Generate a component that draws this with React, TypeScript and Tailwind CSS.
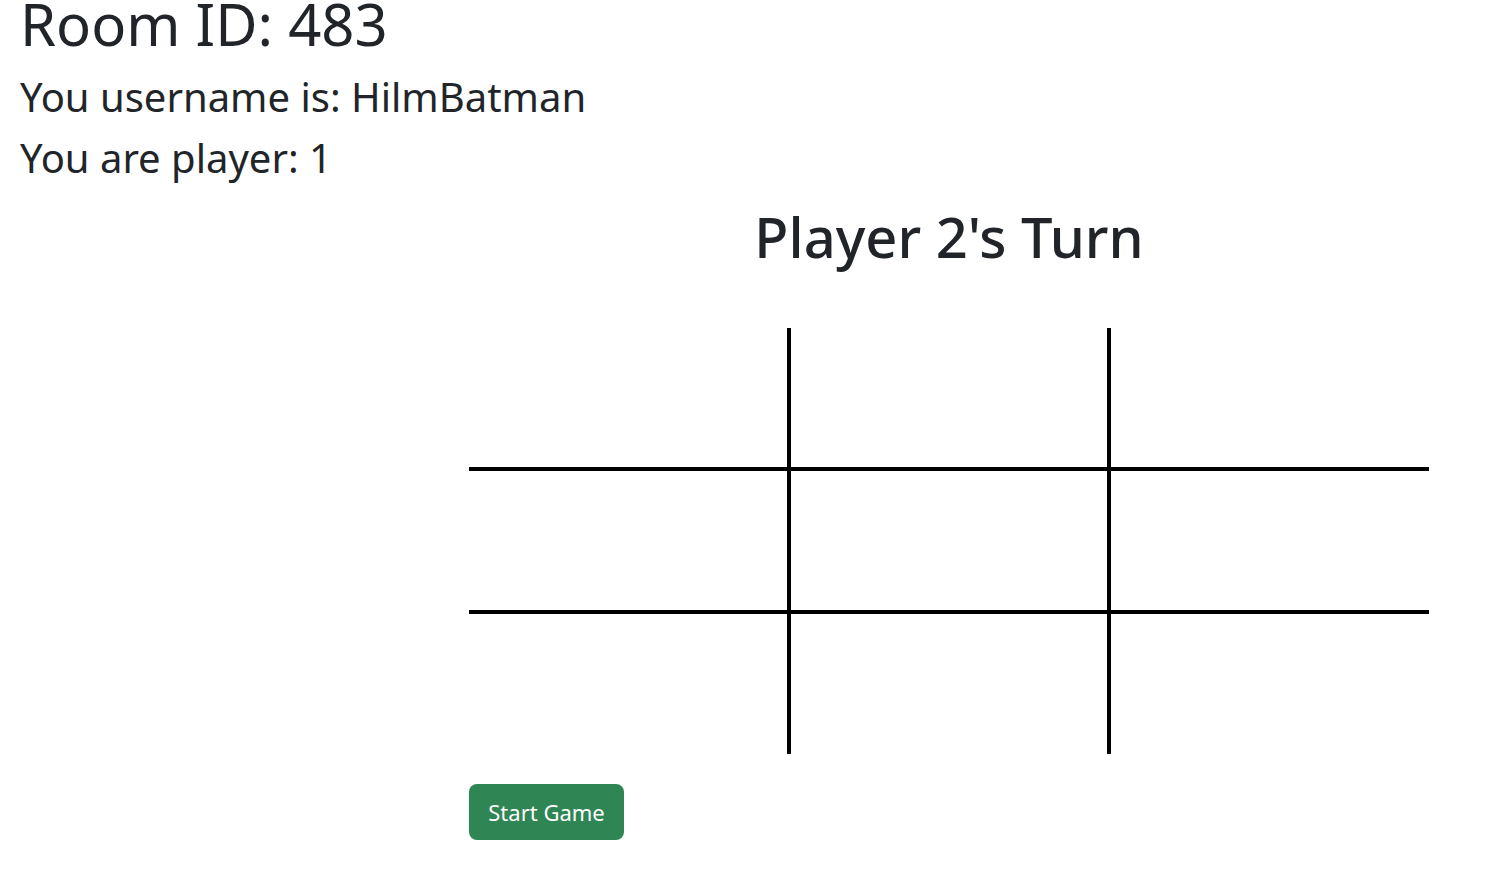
import React from 'react';

const cells = [0, 1, 2, 3, 4, 5, 6, 7, 8];

export default function App() {
  return (
    <div className="min-h-screen bg-white px-5 font-['Noto_Sans','Open_Sans',sans-serif] text-[#212529]">
      <h1 className="text-[58px] leading-[48px] font-normal">Room ID: 483</h1>
      <h2 className="mt-[18px] text-[40px] leading-[61px] font-normal">You username is: HilmBatman</h2>
      <h2 className="text-[40px] leading-[61px] font-normal">You are player: 1</h2>

      <div className="ml-[449px] w-[960px]">
        <h2 className="mt-4 text-center text-[56px] leading-[64px] font-medium">Player 2's Turn</h2>

        {/* board */}
        <div className="mt-[60px] grid grid-cols-[322px_320px_318px] grid-rows-[143px_143px_140px]">
          {cells.map((i) => (
            <div
              key={i}
              className={
                (i % 3 < 2 ? 'border-r-4 ' : '') +
                (i < 6 ? 'border-b-4 ' : '') +
                'border-black'
              }
            />
          ))}
        </div>

        <button className="mt-[30px] flex h-[56px] w-[155px] items-center justify-center rounded-lg bg-[#2f8654] text-[22px] text-white">
          Start Game
        </button>
      </div>
    </div>
  );
}
